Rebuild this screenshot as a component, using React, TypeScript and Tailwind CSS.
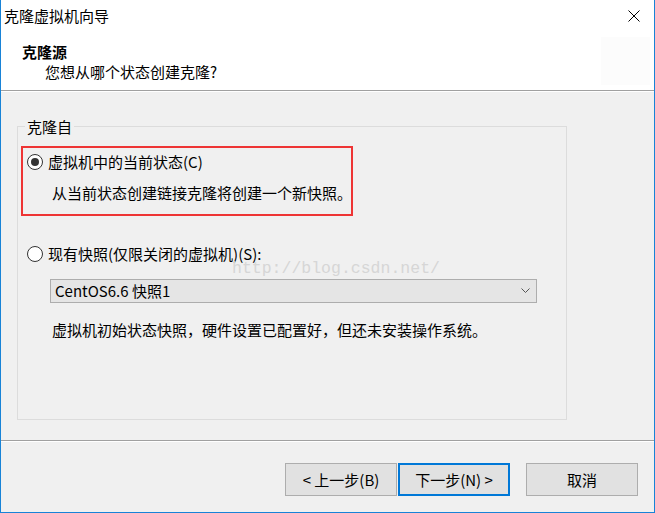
import React from "react";

const font = { fontFamily: '"Noto Sans CJK SC", "Noto Sans", sans-serif' };

function Radio({ checked }: { checked?: boolean }) {
  return (
    <div className="w-[16px] h-[16px] rounded-full border border-[#333333] bg-white flex items-center justify-center shrink-0">
      {checked && <div className="w-[8px] h-[8px] rounded-full bg-[#333333]" />}
    </div>
  );
}

function Btn({ children, primary }: { children: React.ReactNode; primary?: boolean }) {
  return (
    <div
      className={
        "w-[112px] h-[33px] flex items-center justify-center text-[15px] leading-[20px] text-black bg-[#e1e1e1] " +
        (primary ? "border-2 border-[#0078d7]" : "border border-[#adadad]")
      }
    >
      {children}
    </div>
  );
}

export default function App() {
  return (
    <div
      className="w-[655px] h-[513px] flex flex-col border-x border-b border-[#1883d7] bg-[#f0f0f0] text-black overflow-hidden"
      style={font}
    >
      {/* Title bar */}
      <div className="h-[31px] bg-white flex items-center justify-between pl-[3px] pr-[14px] shrink-0">
        <span className="text-[15px] leading-[20px]">克隆虚拟机向导</span>
        <svg width="12" height="12" viewBox="0 0 12 12">
          <path d="M0.5 0.5 L11.5 11.5 M11.5 0.5 L0.5 11.5" stroke="#000" strokeWidth="1" />
        </svg>
      </div>
      {/* Header */}
      <div className="h-[59px] bg-white flex justify-between shrink-0">
        <div className="pt-[11px] pl-[21px]">
          <div className="text-[15px] leading-[20px] font-bold">克隆源</div>
          <div className="text-[15px] leading-[20px] pl-[23px]">您想从哪个状态创建克隆?</div>
        </div>
        <div className="w-[49px] h-[48px] mt-[6px] mr-[4px] bg-[#fcfcfc]" />
      </div>
      <div className="h-px bg-[#a0a0a0] shrink-0" />
      <div className="h-px bg-white shrink-0" />
      {/* Content */}
      <div className="relative h-[348px] shrink-0">
        <div className="relative mt-[34px] ml-[16px] w-[550px] h-[294px] border border-[#dcdcdc] flex flex-col">
          <span className="absolute left-[7px] -top-[10px] px-[2px] bg-[#f0f0f0] text-[15px] leading-[20px]">
            克隆自
          </span>
          {/* red box */}
          <div className="ml-[3px] mt-[19px] w-[332px] h-[70px] border-2 border-[#ee3434] flex flex-col">
            <div className="mt-[6px] ml-[4px] h-[16px] flex items-center gap-[5px]">
              <Radio checked />
              <span className="text-[15px] leading-[20px]">虚拟机中的当前状态(C)</span>
            </div>
            <div className="mt-[13px] ml-[29px] text-[15px] leading-[20px] whitespace-nowrap">
              从当前状态创建链接克隆将创建一个新快照。
            </div>
          </div>
          <div className="mt-[30px] ml-[9px] h-[16px] flex items-center gap-[5px]">
            <Radio />
            <span className="text-[15px] leading-[20px]">现有快照(仅限关闭的虚拟机)(S):</span>
          </div>
          <div className="mt-[17px] ml-[32px] w-[487px] h-[24px] border border-[#adadad] bg-[#e5e5e5] flex items-center justify-between pl-[4px] pr-[6px]">
            <span className="text-[15px] leading-[20px]">CentOS6.6 快照1</span>
            <svg width="9" height="6" viewBox="0 0 9 6">
              <path d="M0.5 0.5 L4.5 4.5 L8.5 0.5" fill="none" stroke="#555" strokeWidth="1" />
            </svg>
          </div>
          <div className="mt-[17px] ml-[34px] text-[15px] leading-[20px] whitespace-nowrap">
            虚拟机初始状态快照，硬件设置已配置好，但还未安装操作系统。
          </div>
        </div>
        <span
          className="absolute left-[231px] top-[167px] text-[16.5px] leading-[20px] text-[#d6d6d6] whitespace-nowrap"
          style={{ fontFamily: '"Liberation Mono", monospace' }}
        >
          http://blog.csdn.net/
        </span>
      </div>
      <div className="h-px bg-[#a0a0a0] shrink-0" />
      <div className="h-px bg-white shrink-0" />
      {/* Footer */}
      <div className="flex-1 flex justify-end items-start pt-[21px] pr-[16px]">
        <Btn>&lt; 上一步(B)</Btn>
        <div className="w-[1px]" />
        <Btn primary>下一步(N) &gt;</Btn>
        <div className="w-[16px]" />
        <Btn>取消</Btn>
      </div>
    </div>
  );
}
